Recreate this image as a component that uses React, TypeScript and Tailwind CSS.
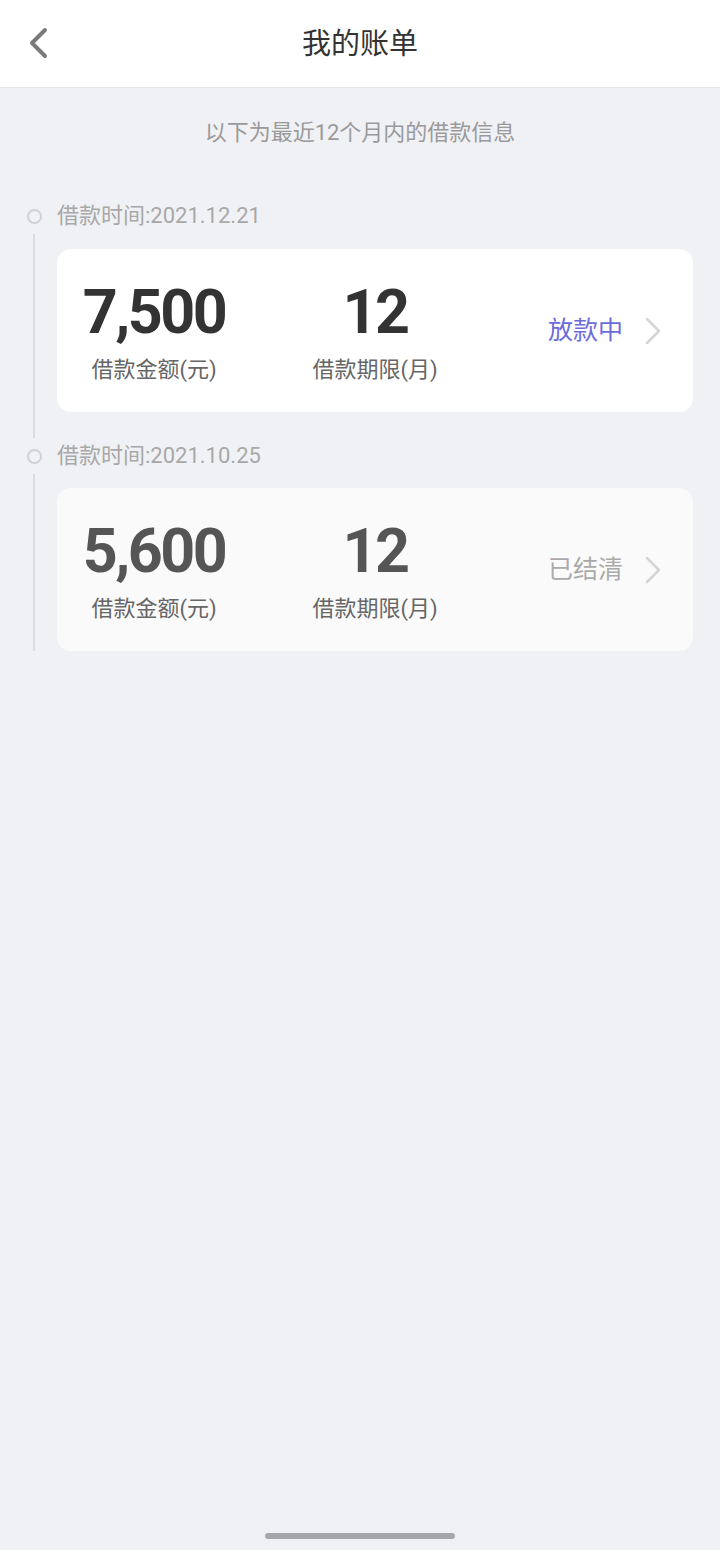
import React from "react";

interface ILoan {
  date: string;
  amount: string;
  term: string;
  status: string;
  done: boolean;
}

const loans: ILoan[] = [
  { date: "2021.12.21", amount: "7,500", term: "12", status: "放款中", done: false },
  { date: "2021.10.25", amount: "5,600", term: "12", status: "已结清", done: true },
];

const base = { fontFamily: 'Roboto, "Noto Sans CJK SC", sans-serif' };

function Chevron({ className }: { className?: string }) {
  return (
    <svg className={className} width="18" height="28" viewBox="0 0 18 28" fill="none">
      <polyline points="3,2 15,14 3,26" stroke="currentColor" strokeWidth="2.5" strokeLinecap="round" strokeLinejoin="round" />
    </svg>
  );
}

function Stat({ value, label, width, done }: { value: string; label: string; width: string; done: boolean }) {
  return (
    <div className={`flex flex-col items-center ${width}`}>
      <span
        className={`h-[61px] text-[61px] leading-[61px] font-bold tracking-[-2.5px] ${done ? "text-[#555555]" : "text-[#333333]"}`}
      >
        {value}
      </span>
      <span className="mt-[12px] text-[22px] leading-[30px] text-[#666666]">{label}</span>
    </div>
  );
}

function LoanItem({ loan, last }: { loan: ILoan; last: boolean }) {
  return (
    <div>
      <div className="flex h-[36px] items-center">
        <div className="w-[57px] pl-[27px]">
          <div className="h-[15px] w-[15px] rounded-full border-2 border-[#d0d0d0]" />
        </div>
        <span className="text-[22px] leading-[30px] text-[#a8a8a8]">借款时间:{loan.date}</span>
      </div>
      <div className="flex">
        <div className="w-[57px] pl-[33px]">
          <div className="h-full w-[2px] bg-[#dcdcdc]" />
        </div>
        <div className={last ? "flex-1 pr-[27px] pt-[14px]" : "flex-1 pr-[27px] pt-[15px] pb-[26px]"}>
          <div className={`flex h-[163px] items-start rounded-[14px] pt-[33px] ${loan.done ? "bg-[#fafafa]" : "bg-white"}`}>
            <Stat value={loan.amount} label="借款金额(元)" width="w-[194px]" done={loan.done} />
            <Stat value={loan.term} label="借款期限(月)" width="w-[248px]" done={loan.done} />
            <div className="mt-[-33px] flex flex-1 items-center justify-end self-center pr-[31px]">
              <span className={`text-[25px] leading-[32px] ${loan.done ? "text-[#aaaaaa]" : "text-[#6c6cd8]"}`}>
                {loan.status}
              </span>
              <Chevron className="ml-[21px] text-[#d4d4d4]" />
            </div>
          </div>
        </div>
      </div>
    </div>
  );
}

export default function App() {
  return (
    <div className="flex min-h-[1550px] w-[720px] flex-col bg-[#f0f1f5]" style={base}>
      <div className="relative flex h-[88px] items-center justify-center border-b border-[#e6e6ea] bg-white pt-[3px]">
        <svg className="absolute left-[26px] top-[27px]" width="26" height="34" viewBox="0 0 26 34" fill="none">
          <polyline points="19,3 6,16 19,29" stroke="#7a7a7a" strokeWidth="4" strokeLinecap="round" strokeLinejoin="round" />
        </svg>
        <span className="text-[29px] text-[#333333]">我的账单</span>
      </div>
      <div className="pt-[30px] text-center text-[22px] leading-[30px] text-[#9a9a9a]">以下为最近12个月内的借款信息</div>
      <div className="mt-[50px]">
        {loans.map((l, i) => (
          <LoanItem key={l.date} loan={l} last={i === loans.length - 1} />
        ))}
      </div>
      <div className="flex-1" />
      <div className="mb-[11px] flex justify-center">
        <div className="h-[6px] w-[190px] rounded-full bg-[#a6a6a8]" />
      </div>
    </div>
  );
}
